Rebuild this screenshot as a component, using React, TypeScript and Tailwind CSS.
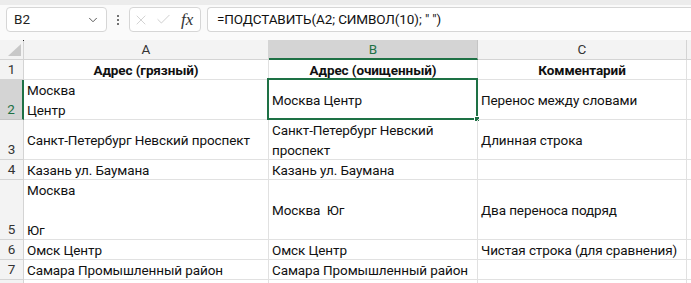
import React from 'react';
import { ChevronDown, X, Check } from 'lucide-react';

type Row = {
  n: number;
  h: string;
  a: string;
  b: string;
  c: string;
  bold?: boolean;
};

const ROWS: Row[] = [
  { n: 1, h: 'h-[20px]', a: 'Адрес (грязный)', b: 'Адрес (очищенный)', c: 'Комментарий', bold: true },
  { n: 2, h: 'h-[40px]', a: 'Москва\nЦентр', b: 'Москва Центр', c: 'Перенос между словами' },
  { n: 3, h: 'h-[40px]', a: 'Санкт-Петербург Невский проспект', b: 'Санкт-Петербург Невский\nпроспект', c: 'Длинная строка' },
  { n: 4, h: 'h-[20px]', a: 'Казань ул. Баумана', b: 'Казань ул. Баумана', c: '' },
  { n: 5, h: 'h-[60px]', a: 'Москва\n\nЮг', b: 'Москва  Юг', c: 'Два переноса подряд' },
  { n: 6, h: 'h-[20px]', a: 'Омск Центр', b: 'Омск Центр', c: 'Чистая строка (для сравнения)' },
  { n: 7, h: 'h-[20px]', a: 'Самара Промышленный район', b: 'Самара Промышленный район', c: '' },
  { n: 8, h: 'h-[20px]', a: '', b: '', c: '' },
];

const font = 'font-["Roboto","Noto_Sans",sans-serif]';

const Cell: React.FC<{ w: string; text: string; bold?: boolean; children?: React.ReactNode }> = ({ w, text, bold, children }) => (
  <div
    className={`relative ${w} shrink-0 h-full border-r border-b border-[#e1e1e1] flex items-center px-[3px] ${
      bold ? 'justify-center font-bold' : ''
    }`}
  >
    <span className="whitespace-pre leading-[20px] text-[13.5px] tracking-[-0.1px] text-[#111]">{text}</span>
    {children}
  </div>
);

const App: React.FC = () => {
  return (
    <div className={`w-[691px] h-[283px] overflow-hidden bg-white ${font}`}>
      {/* top strip */}
      <div className="h-[5px] bg-[#ececec]" />

      {/* formula bar */}
      <div className="h-[35px] bg-[#fafafa] flex items-start pt-[2px] pl-[6px]">
        <div className="w-[101px] h-[25px] bg-white border border-[#d6d6d6] rounded-[4px] flex items-center justify-between pl-[7px] pr-[6px]">
          <span className="text-[13.5px] text-[#222]">B2</span>
          <ChevronDown size={14} strokeWidth={1.5} className="text-[#444]" />
        </div>
        <div className="w-[22px] h-[25px] flex flex-col items-center justify-center gap-[2px]">
          <span className="w-[2px] h-[2px] bg-[#444] rounded-full" />
          <span className="w-[2px] h-[2px] bg-[#444] rounded-full" />
          <span className="w-[2px] h-[2px] bg-[#444] rounded-full" />
        </div>
        <div className="w-[72px] h-[25px] bg-white border border-[#d6d6d6] rounded-[4px] flex items-center pl-[3px] gap-[6px]">
          <X size={16} strokeWidth={1} className="text-[#bdbdbd]" />
          <Check size={17} strokeWidth={1} className="text-[#bdbdbd]" />
          <span className='ml-[3px] text-[17px] italic text-[#333] font-["Liberation_Serif",serif]'>fx</span>
        </div>
        <div className="ml-[6px] flex-1 h-[25px] bg-white border border-[#d6d6d6] border-r-0 rounded-l-[4px] flex items-center pl-[9px]">
          <span className="text-[13.5px] tracking-[-0.1px] text-[#111] whitespace-pre">=ПОДСТАВИТЬ(A2; СИМВОЛ(10); " ")</span>
        </div>
      </div>

      {/* column header */}
      <div className="h-[20px] flex bg-[#f3f3f3]">
        <div className="relative w-[24px] shrink-0 h-full border-r border-b border-[#d4d4d4]">
          <svg className="absolute left-0 top-0" width="24" height="20" viewBox="0 0 24 20">
            <polygon points="21,4 21,16 8,16" fill="#c8c8c8" />
          </svg>
          <span className="absolute right-[-1px] top-0 w-[1px] h-[1px] bg-[#222]" />
        </div>
        <div className="w-[245px] shrink-0 h-full border-r border-b border-[#d4d4d4] flex items-center justify-center text-[13.5px] text-[#333]">
          A
        </div>
        <div className="w-[209px] shrink-0 h-full bg-[#d4d4d4] border-r border-[#c4c4c4] border-b-2 border-b-[#1e7145] flex items-center justify-center text-[13.5px] text-[#1e7145]">
          B
        </div>
        <div className="w-[209px] shrink-0 h-full border-r border-b border-[#d4d4d4] flex items-center justify-center text-[13.5px] text-[#333]">
          C
        </div>
        <div className="flex-1 h-full border-b border-[#d4d4d4]" />
      </div>

      {/* rows */}
      {ROWS.map((r) => (
        <div key={r.n} className={`${r.h} flex`}>
          <div
            className={`w-[24px] shrink-0 h-full border-b flex items-end justify-center text-[13.5px] leading-[20px] ${
              r.n === 2
                ? 'bg-[#d4d4d4] border-b-[#c4c4c4] border-r-2 border-r-[#1e7145] text-[#1e7145]'
                : 'bg-[#f3f3f3] border-r border-[#d4d4d4] text-[#333]'
            }`}
          >
            {r.n < 8 ? r.n : ''}
          </div>
          <Cell w="w-[245px]" text={r.a} bold={r.bold} />
          <Cell w="w-[209px]" text={r.b} bold={r.bold}>
            {r.n === 2 && (
              <>
                <span className="absolute left-[-2px] top-[-2px] right-[-1px] bottom-[-1px] border-2 border-[#1e7145] pointer-events-none" />
                <span className="absolute right-[-3px] bottom-[-3px] w-[6px] h-[6px] bg-[#1e7145] border border-white" />
              </>
            )}
          </Cell>
          <Cell w="w-[209px]" text={r.c} bold={r.bold} />
          <div className="flex-1 h-full border-b border-[#e1e1e1]" />
        </div>
      ))}
    </div>
  );
};

export default App;
